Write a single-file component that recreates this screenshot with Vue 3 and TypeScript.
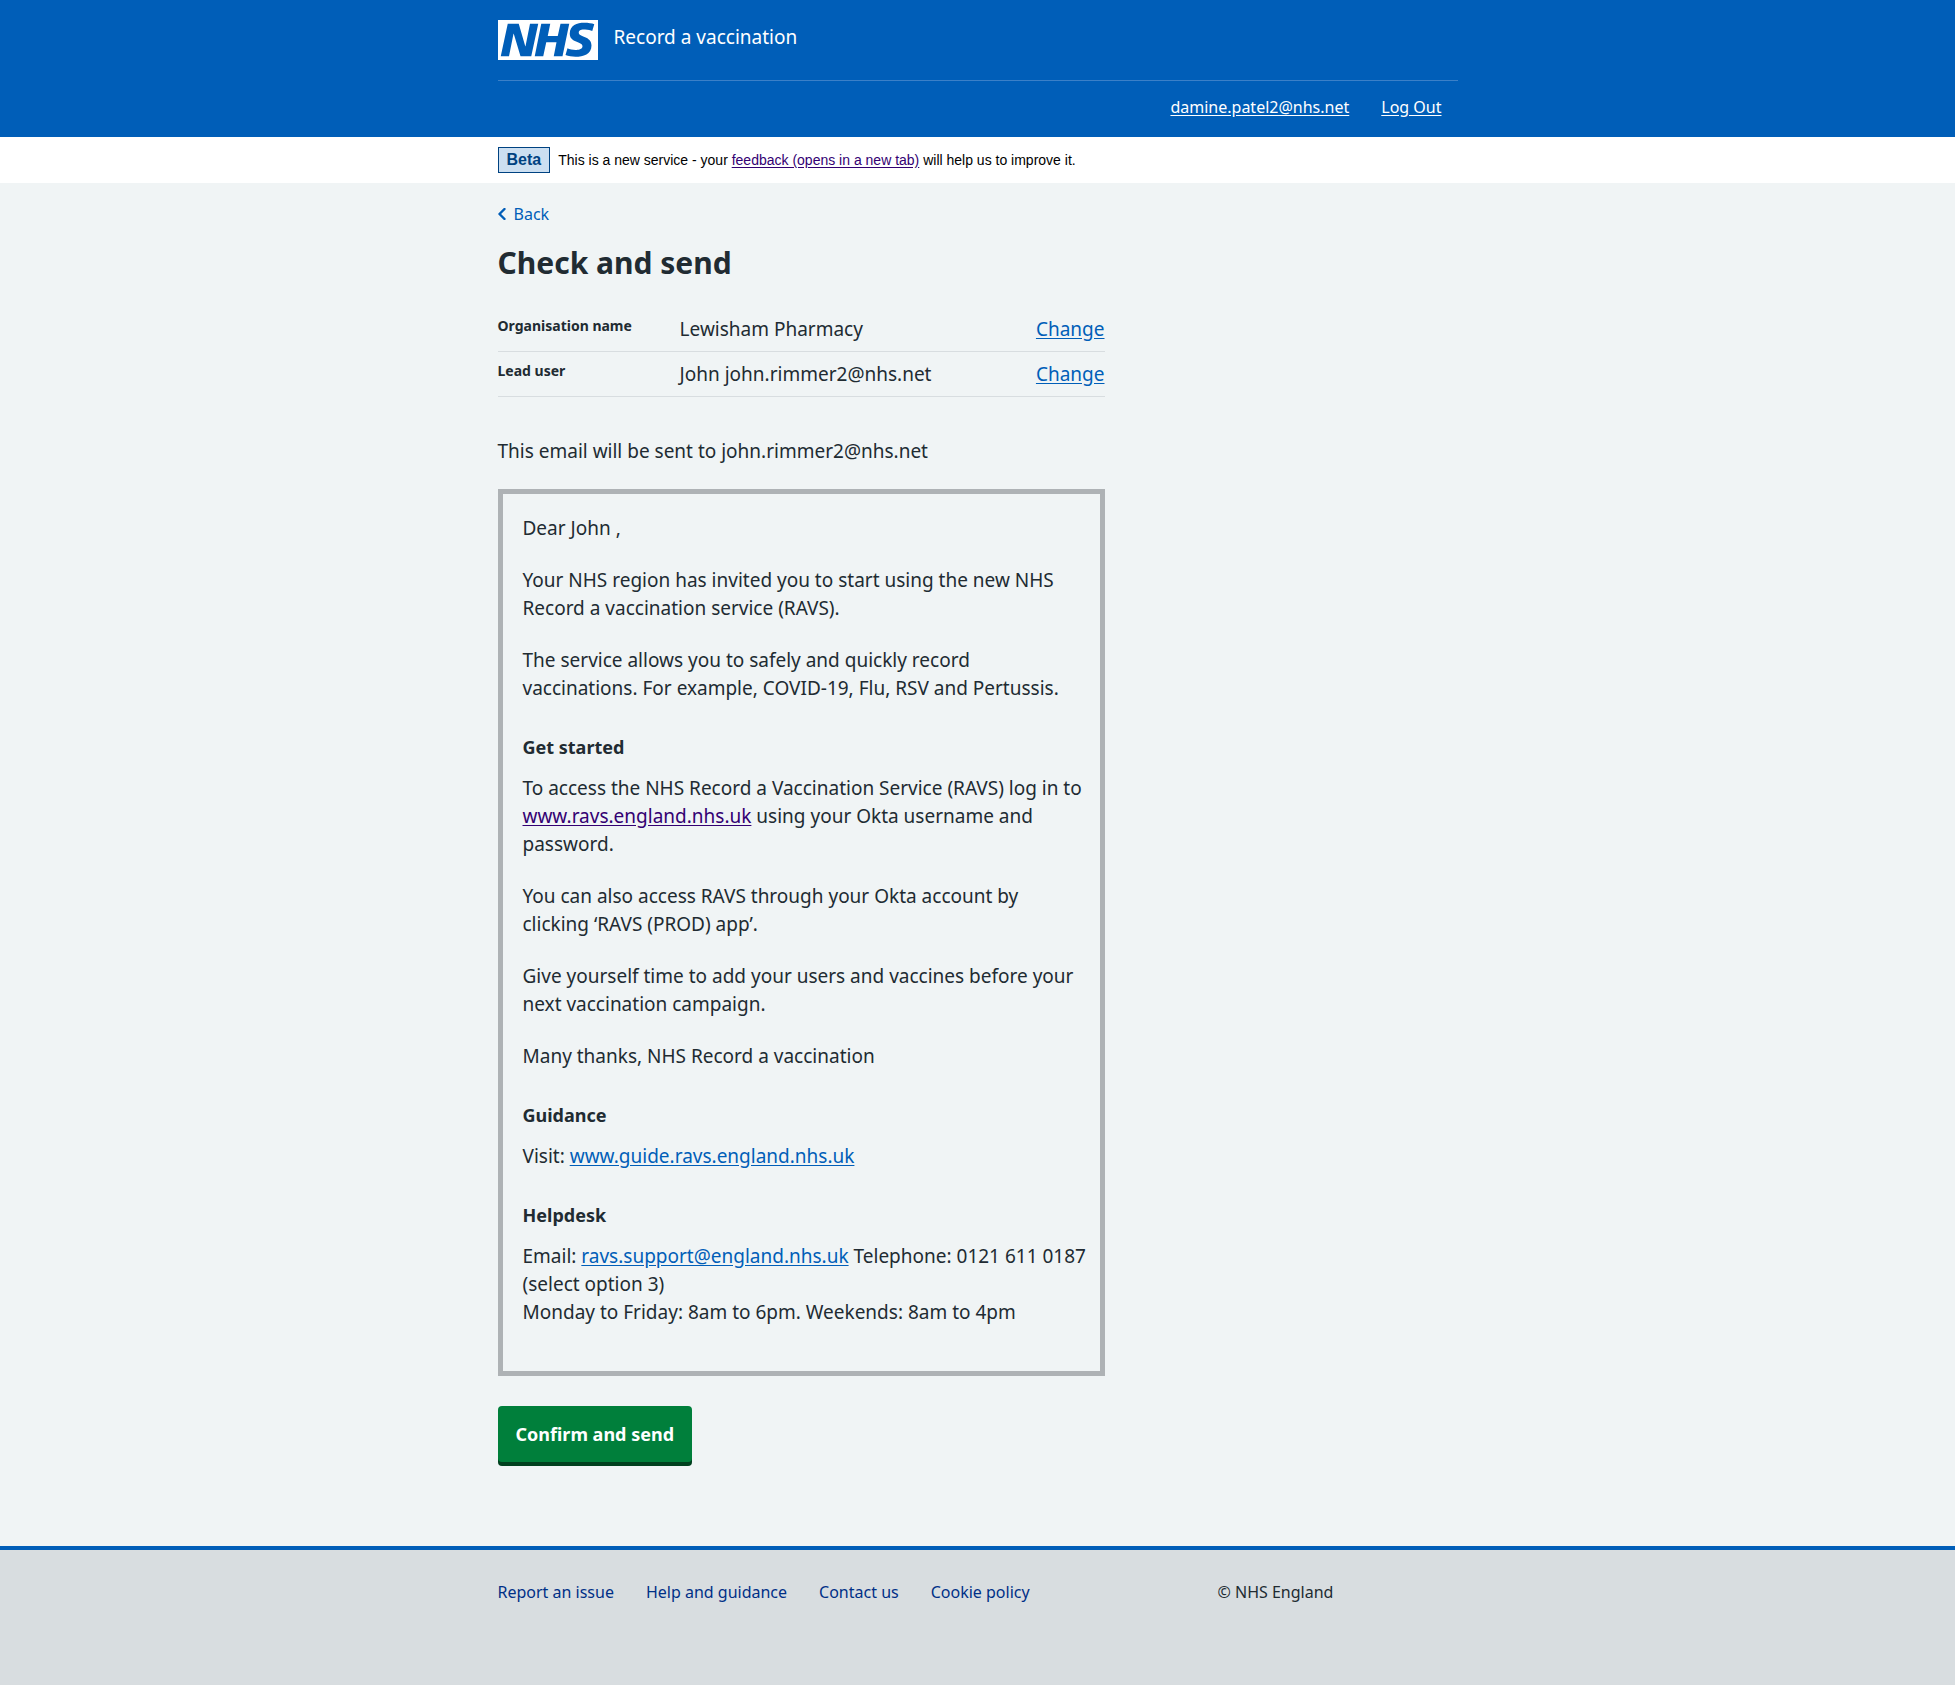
<script setup lang="ts">
interface SummaryRow {
  key: string
  value: string
}

const email = 'john.rimmer2@nhs.net'

const rows: SummaryRow[] = [
  { key: 'Organisation name', value: 'Lewisham Pharmacy' },
  { key: 'Lead user', value: `John ${email}` },
]

const footerLinks: string[] = ['Report an issue', 'Help and guidance', 'Contact us', 'Cookie policy']
</script>

<template>
  <div class="page">
    <header class="header">
      <div class="container">
        <div class="header-top">
          <a href="#" class="logo" aria-label="NHS">
            <svg viewBox="0 0 40 16" width="100" height="40" aria-hidden="true">
              <path fill="#fff" d="M0 0h40v16H0z" />
              <path
                fill="#005eb8"
                d="M3.9 1.5h4.4l2.6 9h.1l1.8-9h3.3l-2.8 13H9l-2.7-9h-.1l-1.8 9H1.1M17.3 1.5h3.6l-1 4.9h4L25 1.5h3.5l-2.7 13h-3.5l1.1-5.6h-4.1l-1.2 5.6h-3.4M37.7 4.4c-.7-.3-1.6-.6-2.9-.6-1.4 0-2.5.2-2.5 1.3 0 1.8 5.1 1.2 5.1 5.1 0 3.6-3.3 4.5-6.4 4.5-1.3 0-2.9-.3-4-.7l.8-2.7c.7.4 2.1.7 3.2.7s2.8-.2 2.8-1.5c0-2.1-5.1-1.3-5.1-5 0-3.4 2.9-4.4 5.8-4.4 1.6 0 3.1.2 4 .6"
              />
            </svg>
          </a>
          <span class="service">Record a vaccination</span>
        </div>
        <nav class="account" aria-label="Account">
          <a href="#">damine.patel2@nhs.net</a>
          <a href="#">Log Out</a>
        </nav>
      </div>
    </header>

    <div class="banner">
      <div class="container banner-inner">
        <strong class="tag">Beta</strong>
        <span>This is a new service - your <a href="#" class="visited">feedback (opens in a new tab)</a> will help us to improve it.</span>
      </div>
    </div>

    <main class="main">
      <div class="container">
        <a href="#" class="back">
          <svg viewBox="8 6 8 12" width="8" height="12" aria-hidden="true">
            <path
              fill="currentColor"
              stroke="currentColor"
              stroke-width=".4"
              d="M8.5 12c0-.3.1-.5.3-.7l5-5c.4-.4 1-.4 1.4 0s.4 1 0 1.4L10.9 12l4.3 4.3c.4.4.4 1 0 1.4s-1 .4-1.4 0l-5-5c-.2-.2-.3-.4-.3-.7z"
            />
          </svg>
          Back
        </a>
        <div class="column">
          <h1>Check and send</h1>
          <dl class="summary">
            <div v-for="row in rows" :key="row.key" class="row">
              <dt>{{ row.key }}</dt>
              <dd class="value">{{ row.value }}</dd>
              <dd><a href="#">Change</a></dd>
            </div>
          </dl>

          <p>This email will be sent to {{ email }}</p>

          <section class="preview">
            <p>Dear John ,</p>
            <p>Your NHS region has invited you to start using the new NHS Record a vaccination service (RAVS).</p>
            <p>The service allows you to safely and quickly record vaccinations. For example, COVID-19, Flu, RSV and Pertussis.</p>
            <h2>Get started</h2>
            <p>To access the NHS Record a Vaccination Service (RAVS) log in to <a href="#" class="visited">www.ravs.england.nhs.uk</a> using your Okta username and password.</p>
            <p>You can also access RAVS through your Okta account by clicking ‘RAVS (PROD) app’.</p>
            <p>Give yourself time to add your users and vaccines before your next vaccination campaign.</p>
            <p>Many thanks, NHS Record a vaccination</p>
            <h2>Guidance</h2>
            <p>Visit: <a href="#">www.guide.ravs.england.nhs.uk</a></p>
            <h2>Helpdesk</h2>
            <p>
              Email: <a href="#">ravs.support@england.nhs.uk</a> Telephone: 0121 611 0187 (select option 3)<br />
              Monday to Friday: 8am to 6pm. Weekends: 8am to 4pm
            </p>
          </section>

          <button type="button" class="confirm">Confirm and send</button>
        </div>
      </div>
    </main>

    <footer class="footer">
      <div class="container footer-inner">
        <ul>
          <li v-for="link in footerLinks" :key="link"><a href="#">{{ link }}</a></li>
        </ul>
        <p>© NHS England</p>
      </div>
    </footer>
  </div>
</template>

<style>
body {
  margin: 0;
  background: #fff;
}
</style>

<style scoped>
.page {
  color: #212b32;
  font-family: 'Noto Sans', 'Open Sans', sans-serif;
  font-size: 19px;
  line-height: 28px;
}

.container {
  max-width: 960px;
  margin: 0 auto;
}

a {
  color: #005eb8;
  text-underline-offset: 2px;
}

a.visited {
  color: #330072;
}

p {
  margin: 0 0 24px;
}

.header {
  background: #005eb8;
  color: #fff;
}

.header-top {
  display: flex;
  align-items: flex-start;
  gap: 16px;
  padding: 20px 0;
  border-bottom: 1px solid #3b80c8;
}

.logo,
.logo svg {
  display: block;
}

.service {
  padding-top: 3px;
}

.account {
  display: flex;
  justify-content: flex-end;
  gap: 32px;
  padding: 12px 16px 16px;
  font-size: 16px;
}

.account a {
  color: #fff;
}

.banner {
  background: #fff;
  font-family: 'Liberation Sans', Arial, sans-serif;
  font-size: 14px;
}

.banner-inner {
  display: flex;
  align-items: center;
  gap: 8px;
  padding: 10px 0;
  color: #000;
  line-height: 26px;
}

.tag {
  padding: 0 8px;
  border: 1px solid #004281;
  background: #ccdff1;
  color: #004281;
  font-size: 16px;
  line-height: 24px;
}

.main {
  padding: 17px 0 84px;
  background: #f0f4f5;
}

.back {
  display: flex;
  align-items: center;
  gap: 8px;
  width: fit-content;
  font-size: 16px;
  line-height: 28px;
  text-decoration: none;
}

.column {
  max-width: 607px;
}

h1 {
  margin: 11px 0 20px;
  font-size: 30px;
  line-height: 48px;
}

.summary {
  margin: 0 0 40px;
}

.row {
  display: flex;
  padding: 8px 0;
  border-bottom: 1px solid #d8dde0;
}

.row dt {
  width: 30%;
  font-size: 14px;
  font-weight: 700;
  line-height: 22px;
}

.row dd {
  margin: 0;
}

.row .value {
  flex: 1;
}

.preview {
  margin-bottom: 30px;
  padding: 20px 12px 21px 20px;
  border: 5px solid #aeb2b5;
}

h2 {
  margin: 31px 0 13px;
  font-size: 18px;
  line-height: 28px;
}

.confirm {
  display: block;
  padding: 14px 18px;
  border: 0;
  border-radius: 4px;
  background: #007f3b;
  box-shadow: 0 4px 0 #00401e;
  color: #fff;
  font: inherit;
  font-size: 18px;
  font-weight: 700;
}

.footer {
  border-top: 4px solid #005eb8;
  background: #d8dde0;
  font-size: 16px;
}

.footer-inner {
  display: flex;
  padding: 28px 0 79px;
}

.footer ul {
  display: flex;
  flex: 3;
  gap: 32px;
  margin: 0;
  padding: 0;
  list-style: none;
}

.footer li a {
  color: #003087;
  text-decoration: none;
}

.footer p {
  flex: 1;
  margin: 0;
}
</style>
